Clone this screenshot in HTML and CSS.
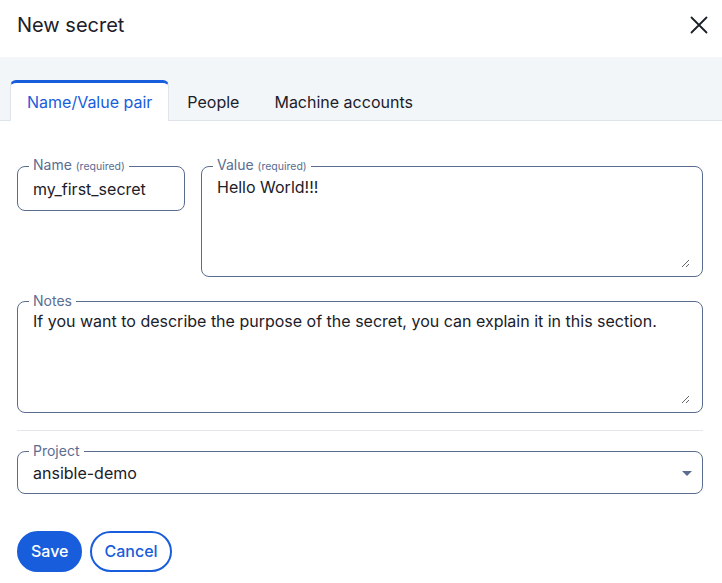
FILE: index.html
```html
<!DOCTYPE html>
<html lang="en">
<head>
<meta charset="utf-8">
<title>New secret</title>
<link rel="stylesheet" href="styles.css">
</head>
<body>
<div class="dialog">
  <header class="dialog-header">
    <h1 class="dialog-title">New secret</h1>
    <button class="close-btn" type="button" aria-label="Close">
      <svg width="18" height="18" viewBox="0 0 18 18" aria-hidden="true">
        <path d="M1.5 1.5 L16.5 16.5 M16.5 1.5 L1.5 16.5" stroke="#1b2029" stroke-width="1.8" stroke-linecap="round" fill="none"/>
      </svg>
    </button>
  </header>

  <nav class="tab-bar">
    <div class="tab tab-active">Name/Value pair</div>
    <div class="tab">People</div>
    <div class="tab">Machine accounts</div>
  </nav>

  <main class="dialog-body">
    <div class="row">
      <fieldset class="field field-name">
        <legend class="field-label">Name <span class="req">(required)</span></legend>
        <input class="field-input" type="text" value="my_first_secret">
      </fieldset>
      <fieldset class="field field-value">
        <legend class="field-label">Value <span class="req">(required)</span></legend>
        <textarea class="field-textarea ta-value">Hello World!!!</textarea>
      </fieldset>
    </div>

    <fieldset class="field field-notes">
      <legend class="field-label">Notes</legend>
      <textarea class="field-textarea ta-notes">If you want to describe the purpose of the secret, you can explain it in this section.</textarea>
    </fieldset>

    <hr class="divider">

    <fieldset class="field field-project">
      <legend class="field-label">Project</legend>
      <div class="select">
        <span class="select-value">ansible-demo</span>
        <svg class="caret" width="10" height="5" viewBox="0 0 10 5" aria-hidden="true">
          <path d="M0 0 L10 0 L5 5 Z" fill="#5a6d91"/>
        </svg>
      </div>
    </fieldset>

    <div class="actions">
      <button class="btn btn-primary" type="button">Save</button>
      <button class="btn btn-secondary" type="button">Cancel</button>
    </div>
  </main>
</div>
</body>
</html>
```

FILE: styles.css
```css
* { box-sizing: border-box; }

html, body {
  margin: 0;
  padding: 0;
  background: #ffffff;
}

body {
  font-family: Inter, "Noto Sans", "Liberation Sans", sans-serif;
  color: #1b2029;
  font-size: 16px;
  line-height: 24px;
}

.dialog {
  width: 722px;
  min-height: 583px;
  background: #ffffff;
}

.dialog-header {
  display: flex;
  align-items: center;
  justify-content: space-between;
  height: 57px;
  padding: 0 10px 8px 17px;
}

.dialog-title {
  margin: 0;
  font-size: 20px;
  line-height: 28px;
  font-weight: 400;
  color: #1b2029;
}

.close-btn {
  display: flex;
  align-items: center;
  justify-content: center;
  width: 26px;
  height: 26px;
  padding: 0;
  border: none;
  background: transparent;
}

.tab-bar {
  display: flex;
  gap: 1px;
  height: 64px;
  padding: 23px 0 0 10px;
  background: #f3f6f9;
  border-bottom: 1px solid #dfe4eb;
}

.tab {
  height: 41px;
  padding: 7px 16px 0;
  border: 1px solid transparent;
  border-top: 3px solid transparent;
  border-bottom: none;
  font-weight: 400;
  color: #1b2029;
  white-space: nowrap;
}

.tab-active {
  background: #ffffff;
  color: #175ddc;
  border-color: #dfe4eb;
  border-top-color: #175ddc;
  border-radius: 6px 6px 0 0;
}

.dialog-body {
  padding: 36px 19px 0 17px;
}

.row {
  display: flex;
  align-items: flex-start;
  gap: 16px;
}

.field {
  margin: 0;
  padding: 0;
  min-width: 0;
  border: 1px solid #5a6d91;
  border-radius: 8px;
}

.field-name { flex: 0 0 168px; }
.field-value { flex: 1 1 auto; padding: 0 12px 8px 0; }

.field-label {
  margin-left: 11px;
  padding: 0 4px;
  font-size: 14px;
  line-height: 16px;
  color: #5a6d91;
}

.req {
  font-size: 10.5px;
}

.field-input {
  display: block;
  width: 100%;
  height: 35px;
  margin: 0;
  padding: 2px 15px 9px;
  border: none;
  outline: none;
  background: transparent;
  font: inherit;
  color: #1b2029;
}

.field-textarea {
  display: block;
  width: 100%;
  margin: 0;
  padding: 0 0 0 15px;
  border: none;
  outline: none;
  background: transparent;
  font: inherit;
  line-height: 24px;
  color: #1b2029;
  resize: vertical;
  overflow: hidden;
}

.ta-value { height: 93px; }

.field-notes {
  margin-top: 16px;
  padding: 0 12px 8px 0;
}

.ta-notes { height: 95px; }

.divider {
  margin: 17px 0 12px;
  border: none;
  border-top: 1px solid #e3e7ed;
  height: 0;
}

.select {
  display: flex;
  align-items: center;
  justify-content: space-between;
  height: 34px;
  padding: 2px 10px 8px 15px;
}

.caret {
  display: block;
}

.actions {
  display: flex;
  gap: 8px;
  margin-top: 37px;
}

.btn {
  height: 41px;
  padding: 6px 12px;
  border: 2px solid #175ddc;
  border-radius: 999px;
  font: inherit;
  font-weight: 500;
  line-height: 25px;
}

.btn-primary {
  background: #175ddc;
  color: #ffffff;
}

.btn-secondary {
  background: #ffffff;
  color: #175ddc;
}
```
